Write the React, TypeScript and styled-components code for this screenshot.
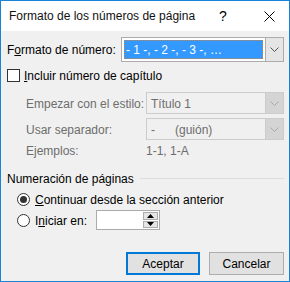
import React from 'react';
import styled, { createGlobalStyle } from 'styled-components';

const GlobalStyle = createGlobalStyle`
  body {
    margin: 0;
    background: #ffffff;
  }
`;

const Window = styled.div`
  width: 290px;
  height: 282px;
  box-sizing: border-box;
  border: 1px solid #1a83d6;
  display: flex;
  flex-direction: column;
  font-family: 'Liberation Sans', Arial, sans-serif;
  font-size: 12px;
  color: #000;
`;

const TitleBar = styled.div`
  height: 30px;
  background: #ffffff;
  display: flex;
  align-items: center;
  padding-left: 8px;
  flex-shrink: 0;
`;

const Title = styled.div`
  flex: 1;
  font-size: 12px;
  white-space: nowrap;
  color: #111;
`;

const TitleButton = styled.div<{ $w: number }>`
  width: ${(p) => p.$w}px;
  height: 100%;
  display: flex;
  align-items: center;
  justify-content: center;
  font-size: 14px;
`;

const Body = styled.div`
  flex: 1;
  background: #f0f0f0;
  padding: 6px 5px 0 6px;
  display: flex;
  flex-direction: column;
`;

const Row = styled.div<{ $h: number; $mt?: number; $indent?: number }>`
  display: flex;
  align-items: center;
  height: ${(p) => p.$h}px;
  margin-top: ${(p) => p.$mt ?? 0}px;
  padding-left: ${(p) => p.$indent ?? 0}px;
  flex-shrink: 0;
`;

const Label = styled.span<{ $w?: number; $disabled?: boolean }>`
  width: ${(p) => (p.$w ? `${p.$w}px` : 'auto')};
  flex-shrink: 0;
  color: ${(p) => (p.$disabled ? '#6d6d6d' : '#000')};
  white-space: nowrap;
  padding-top: 1px;
`;

const Combo = styled.div<{ $disabled?: boolean }>`
  flex: 1;
  height: 100%;
  box-sizing: border-box;
  display: flex;
  border: 1px solid ${(p) => (p.$disabled ? '#cccccc' : '#acacac')};
  background: ${(p) => (p.$disabled ? '#f0f0f0' : '#ffffff')};
`;

const ComboValue = styled.div<{ $disabled?: boolean }>`
  flex: 1;
  display: flex;
  align-items: center;
  padding: 1px 0 0 4px;
  color: ${(p) => (p.$disabled ? '#6d6d6d' : '#000')};
  white-space: pre;
`;

const Selected = styled.div`
  flex: 1;
  margin: 2px;
  display: flex;
  align-items: center;
  padding: 1px 0 0 2px;
  background: #3399ff;
  color: #ffffff;
  outline: 1px dotted #c88440;
  outline-offset: -1px;
`;

const ComboArrow = styled.div<{ $disabled?: boolean }>`
  width: 17px;
  flex-shrink: 0;
  display: flex;
  align-items: center;
  justify-content: center;
  background: ${(p) => (p.$disabled ? '#d4d4d4' : '#e5e5e5')};
  border-left: 1px solid ${(p) => (p.$disabled ? '#cccccc' : '#acacac')};
`;

const Box = styled.span`
  width: 13px;
  height: 13px;
  box-sizing: border-box;
  border: 1px solid #333333;
  background: #ffffff;
  margin-right: 4px;
  flex-shrink: 0;
`;

const Radio = styled.span<{ $checked?: boolean }>`
  width: 13px;
  height: 13px;
  box-sizing: border-box;
  border-radius: 50%;
  border: 1px solid #333333;
  background: #ffffff;
  margin-right: 5px;
  flex-shrink: 0;
  display: flex;
  align-items: center;
  justify-content: center;

  &::after {
    content: '';
    display: ${(p) => (p.$checked ? 'block' : 'none')};
    width: 7px;
    height: 7px;
    border-radius: 50%;
    background: #333333;
  }
`;

const GroupLine = styled.div`
  flex: 1;
  height: 1px;
  background: #dcdcdc;
  margin-left: 6px;
`;

const Spin = styled.div`
  width: 64px;
  height: 20px;
  box-sizing: border-box;
  border: 1px solid #ababab;
  background: #ffffff;
  display: flex;
  justify-content: flex-end;
  padding: 1px;
`;

const SpinButtons = styled.div`
  width: 15px;
  display: flex;
  flex-direction: column;
  gap: 1px;
`;

const SpinButton = styled.div`
  flex: 1;
  background: #e5e5e5;
  border: 1px solid #acacac;
  display: flex;
  align-items: center;
  justify-content: center;
`;

const Footer = styled.div`
  display: flex;
  justify-content: flex-end;
  gap: 9px;
  margin-top: 22px;
`;

const Button = styled.div<{ $primary?: boolean; $w: number }>`
  width: ${(p) => p.$w}px;
  height: 23px;
  box-sizing: border-box;
  display: flex;
  align-items: center;
  justify-content: center;
  padding-top: 1px;
  background: #e1e1e1;
  border: ${(p) => (p.$primary ? '2px solid #0078d7' : '1px solid #adadad')};
`;

const Chevron = ({ color }: { color: string }) => (
  <svg width="9" height="5" viewBox="0 0 9 5">
    <polyline points="0.5,0.5 4.5,4.5 8.5,0.5" fill="none" stroke={color} strokeWidth="1" />
  </svg>
);

const Arrow = ({ up }: { up?: boolean }) => (
  <svg width="7" height="4" viewBox="0 0 7 4">
    <polygon points={up ? '0,4 7,4 3.5,0' : '0,0 7,0 3.5,4'} fill="#000" />
  </svg>
);

export default function App() {
  return (
    <Window>
      <GlobalStyle />
      <TitleBar>
        <Title>Formato de los números de página</Title>
        <TitleButton $w={52}>?</TitleButton>
        <TitleButton $w={40}>
          <svg width="11" height="11" viewBox="0 0 11 11">
            <path d="M0.5 0.5 L10.5 10.5 M10.5 0.5 L0.5 10.5" stroke="#000" strokeWidth="1" />
          </svg>
        </TitleButton>
      </TitleBar>
      <Body>
        <Row $h={25}>
          <Label $w={114}>F<u>o</u>rmato de número:</Label>
          <Combo>
            <Selected>- 1 -, - 2 -, - 3 -, …</Selected>
            <ComboArrow>
              <Chevron color="#555" />
            </ComboArrow>
          </Combo>
        </Row>
        <Row $h={17} $mt={5}>
          <Box />
          <Label><u>I</u>ncluir número de capítulo</Label>
        </Row>
        <Row $h={22} $mt={8} $indent={19}>
          <Label $w={120} $disabled>Empezar con el estilo:</Label>
          <Combo $disabled>
            <ComboValue $disabled>Título 1</ComboValue>
            <ComboArrow $disabled>
              <Chevron color="#a8a8a8" />
            </ComboArrow>
          </Combo>
        </Row>
        <Row $h={22} $mt={4} $indent={19}>
          <Label $w={120} $disabled>Usar separador:</Label>
          <Combo $disabled>
            <ComboValue $disabled>{'-      (guión)'}</ComboValue>
            <ComboArrow $disabled>
              <Chevron color="#a8a8a8" />
            </ComboArrow>
          </Combo>
        </Row>
        <Row $h={18} $mt={1} $indent={19}>
          <Label $w={120} $disabled>Ejemplos:</Label>
          <Label $disabled>1-1, 1-A</Label>
        </Row>
        <Row $h={18} $mt={10}>
          <Label>Numeración de páginas</Label>
          <GroupLine />
        </Row>
        <Row $h={20} $mt={2} $indent={10}>
          <Radio $checked />
          <Label><u>C</u>ontinuar desde la sección anterior</Label>
        </Row>
        <Row $h={20} $mt={1} $indent={10}>
          <Radio />
          <Label $w={61}>I<u>n</u>iciar en:</Label>
          <Spin>
            <SpinButtons>
              <SpinButton>
                <Arrow up />
              </SpinButton>
              <SpinButton>
                <Arrow />
              </SpinButton>
            </SpinButtons>
          </Spin>
        </Row>
        <Footer>
          <Button $primary $w={74}>Aceptar</Button>
          <Button $w={75}>Cancelar</Button>
        </Footer>
      </Body>
    </Window>
  );
}
